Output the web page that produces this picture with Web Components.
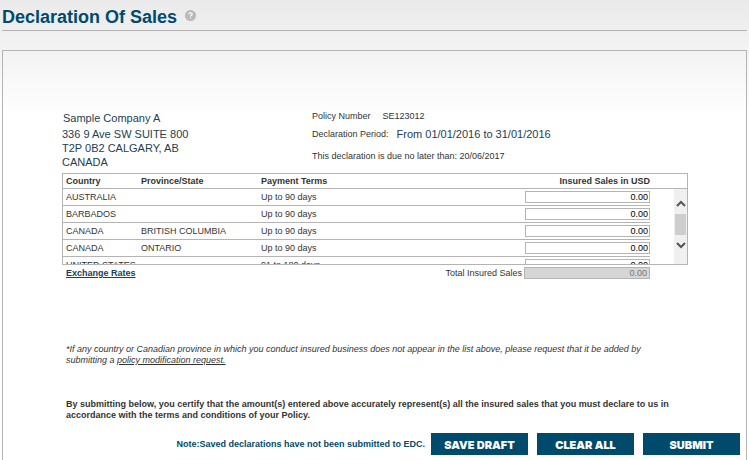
<!DOCTYPE html>
<html lang="en">
<head>
<meta charset="utf-8">
<title>Declaration Of Sales</title>
<style>
  html { background: #fff linear-gradient(#eaeaea, #fff 116px) no-repeat; }
  body {
    margin: 0;
    color: #333;
    font: 9px/12px "Liberation Sans", Arial, sans-serif;
  }
</style>
</head>
<body>
<declaration-page>
  <page-title slot="title">Declaration Of Sales</page-title>
  <policy-summary></policy-summary>
  <sales-table></sales-table>
  <sales-total></sales-total>
  <declaration-notes></declaration-notes>
  <action-bar slot="actions">
    <action-button>SAVE DRAFT</action-button>
    <action-button>CLEAR ALL</action-button>
    <action-button>SUBMIT</action-button>
  </action-bar>
</declaration-page>

<script>
class DeclarationPage extends HTMLElement {
  constructor() {
    super();
    const shadow = this.attachShadow({ mode: "open" });
    shadow.innerHTML = `
      <style>
        :host { display: block; padding: 0 2px; }
        main {
          margin-top: 19px;
          padding-top: 60px;
          border: 1px solid #b4b4b4;
          border-bottom: none;
          background: linear-gradient(#f3f3f3, #fff 66px);
        }
        .content { padding: 0 58px 0 59px; }
      </style>
      <slot name="title"></slot>
      <main>
        <div class="content"><slot></slot></div>
        <slot name="actions"></slot>
      </main>
    `;
  }
}

class PageTitle extends HTMLElement {
  constructor() {
    super();
    const shadow = this.attachShadow({ mode: "open" });
    shadow.innerHTML = `
      <style>
        :host {
          display: flex;
          align-items: center;
          gap: 8px;
          height: 30px;
          border-bottom: 1px solid #b4b4b4;
        }
        h1 { margin: 3px 0 0; color: #004b6b; font-size: 18px; line-height: 20px; }
        button { padding: 0; border: none; background: none; height: 11px; }
        svg { display: block; }
      </style>
      <h1><slot></slot></h1>
      <button aria-label="Help">
        <svg width="11" height="11" viewBox="0 0 11 11">
          <circle cx="5.5" cy="5.5" r="5.5" fill="#b9b9b9"/>
          <path d="M3.8 4.3C3.8 2.4 7.2 2.4 7.2 4.2C7.2 5.3 5.5 5.2 5.5 6.5M5.5 7.4V8.5" fill="none" stroke="#fff" stroke-width="1.2"/>
        </svg>
      </button>
    `;
  }
}

class PolicySummary extends HTMLElement {
  constructor() {
    super();
    const shadow = this.attachShadow({ mode: "open" });
    shadow.innerHTML = `
      <style>
        :host {
          display: grid;
          grid-template-columns: 250px 1fr;
          height: 62px;
        }
        address { color: #24404f; font-size: 11px; font-style: normal; line-height: 14px; }
        .name { margin: 0 0 2px 1px; }
        .policy div { display: flex; align-items: center; height: 18px; }
        .policy div:first-child { height: 10px; gap: 12px; }
        .policy div:nth-child(2) { height: 26px; gap: 8px; }
        .period { color: #24404f; font-size: 11px; }
      </style>
      <address>
        <div class="name">Sample Company A</div>
        <div>336 9 Ave SW SUITE 800</div>
        <div>T2P 0B2 CALGARY, AB</div>
        <div>CANADA</div>
      </address>
      <div class="policy">
        <div><span>Policy Number</span><span>SE123012</span></div>
        <div><span>Declaration Period:</span><span class="period">From 01/01/2016 to 31/01/2016</span></div>
        <div>This declaration is due no later than: 20/06/2017</div>
      </div>
    `;
  }
}

const rows = [
  ["AUSTRALIA", "", "Up to 90 days"],
  ["BARBADOS", "", "Up to 90 days"],
  ["CANADA", "BRITISH COLUMBIA", "Up to 90 days"],
  ["CANADA", "ONTARIO", "Up to 90 days"],
  ["UNITED STATES", "", "91 to 180 days"],
];

class SalesTable extends HTMLElement {
  constructor() {
    super();
    const shadow = this.attachShadow({ mode: "open" });
    const body = rows.map(([country, province, terms]) => `
      <tr>
        <td>${country}</td><td>${province}</td><td>${terms}</td>
        <td class="amount"><input value="0.00" aria-label="Insured sales, ${country} ${province}"></td>
        <td class="gutter"></td>
      </tr>`).join("");

    shadow.innerHTML = `
      <style>
        :host {
          display: grid;
          height: 90px;
          border: 1px solid #b4b4b4;
          background: #fff;
          overflow: hidden;
        }
        table, .scroll { grid-area: 1 / 1; }
        table { width: 100%; align-self: start; table-layout: fixed; border-collapse: separate; border-spacing: 0; }
        th, td {
          box-sizing: border-box;
          height: 17px;
          padding: 0 0 0 3px;
          border-bottom: 1px solid #b4b4b4;
          text-align: left;
          white-space: nowrap;
        }
        th { height: 15px; }
        td.gutter { border-bottom: none; }
        .amount { padding: 0; text-align: right; }
        input {
          display: block;
          box-sizing: border-box;
          width: 100%;
          height: 12px;
          padding: 0 1px;
          border: 1px solid #b4b4b4;
          background: #fff;
          color: #000;
          font: 9px/10px "Liberation Sans", Arial, sans-serif;
          text-align: right;
        }
        .scroll {
          display: flex;
          flex-direction: column;
          align-items: center;
          gap: 7px;
          justify-self: end;
          box-sizing: border-box;
          width: 13px;
          height: 75px;
          margin-top: 15px;
          padding-top: 11px;
          background: #f0f0f0;
        }
        .scroll button { padding: 0; border: none; background: none; }
        .scroll svg { display: block; }
        .thumb { width: 11px; height: 21px; background: #cdcdcd; }
      </style>
      <table>
        <colgroup>
          <col style="width: 75px"><col style="width: 120px"><col>
          <col style="width: 125px"><col style="width: 37px">
        </colgroup>
        <thead>
          <tr><th>Country</th><th>Province/State</th><th>Payment Terms</th><th class="amount">Insured Sales in USD</th><th></th></tr>
        </thead>
        <tbody>${body}</tbody>
      </table>
      <div class="scroll">
        <button aria-label="Scroll up"><svg width="10" height="7" viewBox="0 0 10 7"><path d="M1 6L5 2L9 6" fill="none" stroke="#555" stroke-width="2"/></svg></button>
        <div class="thumb"></div>
        <button aria-label="Scroll down"><svg width="10" height="7" viewBox="0 0 10 7"><path d="M1 1L5 5L9 1" fill="none" stroke="#555" stroke-width="2"/></svg></button>
      </div>
    `;
  }
}

class SalesTotal extends HTMLElement {
  constructor() {
    super();
    const shadow = this.attachShadow({ mode: "open" });
    shadow.innerHTML = `
      <style>
        :host {
          display: flex;
          align-items: center;
          justify-content: space-between;
          padding: 2px 38px 0 4px;
        }
        a { color: #17435a; font-weight: bold; }
        .total { display: flex; align-items: center; gap: 2px; }
        input {
          box-sizing: border-box;
          width: 126px;
          height: 12px;
          margin: 0;
          padding: 0 2px;
          border: 1px solid #b4b4b4;
          background: #d6d6d6;
          color: #777;
          font: 9px/10px "Liberation Sans", Arial, sans-serif;
          text-align: right;
        }
      </style>
      <a href="#rates">Exchange Rates</a>
      <div class="total">
        <label for="total">Total Insured Sales</label>
        <input id="total" value="0.00" readonly>
      </div>
    `;
  }
}

class DeclarationNotes extends HTMLElement {
  constructor() {
    super();
    const shadow = this.attachShadow({ mode: "open" });
    shadow.innerHTML = `
      <style>
        :host { display: block; padding: 65px 16px 0 4px; }
        p { margin: 0; line-height: 11px; }
        .hint { font-style: italic; }
        .certify { margin-top: 33px; font-weight: bold; }
        a { color: inherit; }
      </style>
      <p class="hint">*If any country or Canadian province in which you conduct insured business does not appear in the list above, please request that it be added by submitting a <a href="#modify">policy modification request.</a></p>
      <p class="certify">By submitting below, you certify that the amount(s) entered above accurately represent(s) all the insured sales that you must declare to us in accordance with the terms and conditions of your Policy.</p>
    `;
  }
}

class ActionBar extends HTMLElement {
  constructor() {
    super();
    const shadow = this.attachShadow({ mode: "open" });
    shadow.innerHTML = `
      <style>
        :host {
          display: flex;
          align-items: center;
          justify-content: flex-end;
          gap: 9px;
          padding: 12px 6px 5px;
        }
        .note { margin-right: -3px; color: #004b6b; font-weight: bold; }
      </style>
      <span class="note">Note:Saved declarations have not been submitted to EDC.</span>
      <slot></slot>
    `;
  }
}

class ActionButton extends HTMLElement {
  constructor() {
    super();
    const shadow = this.attachShadow({ mode: "open" });
    shadow.innerHTML = `
      <style>
        :host { display: block; }
        button {
          display: block;
          width: 97px;
          height: 22px;
          padding: 2px 0 0;
          border: none;
          background: #004b6b;
          color: #fff;
          font: 900 11px/20px Inter, "Liberation Sans", sans-serif;
        }
      </style>
      <button><slot></slot></button>
    `;
  }
}

customElements.define("declaration-page", DeclarationPage);
customElements.define("page-title", PageTitle);
customElements.define("policy-summary", PolicySummary);
customElements.define("sales-table", SalesTable);
customElements.define("sales-total", SalesTotal);
customElements.define("declaration-notes", DeclarationNotes);
customElements.define("action-bar", ActionBar);
customElements.define("action-button", ActionButton);
</script>
</body>
</html>
